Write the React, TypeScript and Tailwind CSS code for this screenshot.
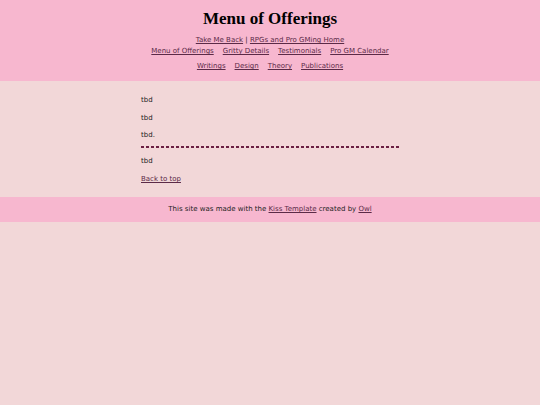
import React from "react";

const linkCls = "text-[#5b2a47] underline";

export default function App() {
  return (
    <div className="min-h-[405px] bg-[#f2d7d8] text-[#222] text-[7px] leading-[10px] font-['DejaVu_Sans',Verdana,sans-serif]">
      {/* header */}
      <header className="bg-[#f7b7cf] pt-[8px] pb-[10px] text-center">
        <h1 className="text-[17px] leading-[22px] font-bold text-black font-['Liberation_Serif','Times_New_Roman',serif]">
          Menu of Offerings
        </h1>
        <div className="mt-[5px]">
          <a href="#" className={linkCls}>Take Me Back</a> |{" "}
          <a href="#" className={linkCls}>RPGs and Pro GMing Home</a>
        </div>
        <div className="mt-[1px] flex justify-center gap-[9px]">
          <a href="#" className={linkCls}>Menu of Offerings</a>
          <a href="#" className={linkCls}>Gritty Details</a>
          <a href="#" className={linkCls}>Testimonials</a>
          <a href="#" className={linkCls}>Pro GM Calendar</a>
        </div>
        <div className="mt-[5px] flex justify-center gap-[9px]">
          <a href="#" className={linkCls}>Writings</a>
          <a href="#" className={linkCls}>Design</a>
          <a href="#" className={linkCls}>Theory</a>
          <a href="#" className={linkCls}>Publications</a>
        </div>
      </header>

      {/* main */}
      <main className="w-[258px] mx-auto pt-[14px] pb-[13px]">
        <p>tbd</p>
        <p className="mt-[8px]">tbd</p>
        <p className="mt-[7px]">tbd.</p>
        <div className="mt-[6px] h-[2px] bg-[repeating-linear-gradient(to_right,#6b1f42_0_3px,transparent_3px_5px)]" />
        <p className="mt-[8px]">tbd</p>
        <p className="mt-[8px]">
          <a href="#" className={linkCls}>Back to top</a>
        </p>
      </main>

      {/* footer */}
      <footer className="bg-[#f7b7cf] pt-[7px] pb-[8px] text-center">
        This site was made with the <a href="#" className={linkCls}>Kiss Template</a> created by{" "}
        <a href="#" className={linkCls}>Owl</a>
      </footer>
    </div>
  );
}
